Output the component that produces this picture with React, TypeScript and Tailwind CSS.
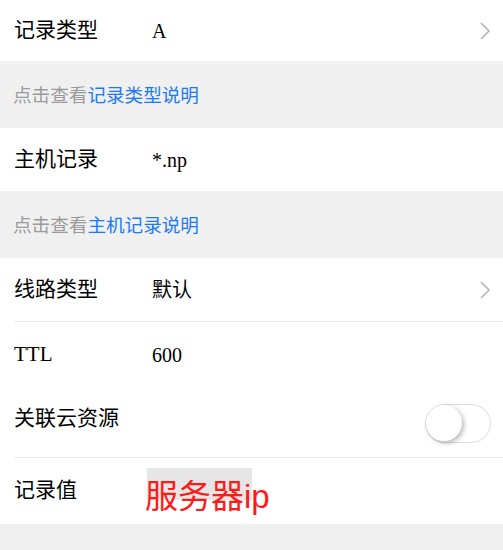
import type { ReactNode } from "react";

function Chevron() {
  return (
    <svg width="12" height="20" viewBox="0 0 12 20" className="mr-[12px]">
      <polyline
        points="2,2 10,10 2,18"
        fill="none"
        stroke="#b4b4bc"
        strokeWidth="1.6"
      />
    </svg>
  );
}

function Row({
  label,
  value,
  height,
  right,
  labelClass = "",
}: {
  label: string;
  value?: ReactNode;
  height: string;
  right?: ReactNode;
  labelClass?: string;
}) {
  return (
    <div className={`flex items-center bg-white ${height}`}>
      <div className={`w-[152px] pl-[14px] text-[21px] text-black ${labelClass}`}>
        {label}
      </div>
      <div className="flex-1 text-[20px] text-black">{value}</div>
      {right}
    </div>
  );
}

function Hint({ link }: { link: string }) {
  return (
    <div className="flex h-[67px] items-center bg-[#f0f0f0] pl-[13px] pt-[3px] text-[18.6px]">
      <span className="text-[#9a9a9a]">点击查看</span>
      <span className="text-[#1a7af8]">{link}</span>
    </div>
  );
}

export default function App() {
  return (
    <main
      className="h-[550px] w-[503px] overflow-hidden bg-[#f0f0f0]"
      style={{ fontFamily: '"Liberation Serif", "Noto Sans CJK SC", serif' }}
    >
      <Row label="记录类型" value="A" height="h-[61px]" right={<Chevron />} />
      <Hint link="记录类型说明" />
      <Row label="主机记录" value="*.np" height="h-[63px]" />
      <Hint link="主机记录说明" />

      <div className="bg-white">
        <Row label="线路类型" value="默认" height="h-[63px]" right={<Chevron />} />
        <div className="ml-[14px] h-px bg-[#ececec]" />
        <Row label="TTL" value="600" height="h-[66px]" />
        <Row
          label="关联云资源"
          height="h-[69px]"
          labelClass="mb-[8px]"
          right={
            <div className="mr-[12px] mt-[1px] flex h-[39px] w-[66px] items-center rounded-full border border-[#dcdcdc] bg-white">
              <div className="h-[36px] w-[36px] rounded-full bg-white shadow-[2px_2px_5px_rgba(0,0,0,0.28)]" />
            </div>
          }
        />
        <div className="ml-[14px] h-px bg-[#ececec]" />
        <div className="flex h-[66px] items-center">
          <div className="w-[132px] pl-[14px] text-[21px] text-black">记录值</div>
          <div className="relative mt-[12px]">
            <span className="absolute left-[15px] top-[-12px] h-[32px] w-[105px] bg-[#e6e6e6]" />
            <span
              className="relative pl-[13px] text-[33px] leading-none text-[#ff1a1a]"
              style={{ fontFamily: '"Liberation Sans", "Noto Sans CJK SC", sans-serif' }}
            >
              服务器ip
            </span>
          </div>
        </div>
      </div>
    </main>
  );
}
